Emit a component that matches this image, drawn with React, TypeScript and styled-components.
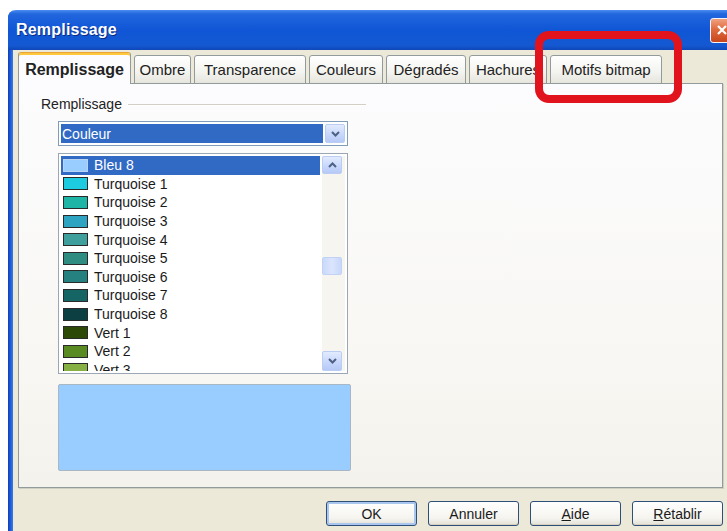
import styled, { createGlobalStyle } from 'styled-components'

const GlobalStyle = createGlobalStyle`
  html, body {
    margin: 0;
    padding: 0;
    background: #ffffff;
    overflow: hidden;
  }
  body {
    font-family: "Liberation Sans", Arial, sans-serif;
    color: #1a1a1a;
  }
`

const Page = styled.div`
  position: relative;
  width: 727px;
  height: 531px;
  padding: 10px 0 0 8px;
  box-sizing: border-box;
`

const Window = styled.div`
  width: 725px;
  height: 521px;
  display: flex;
  flex-direction: column;
  border-top-left-radius: 8px;
  overflow: hidden;
  background: linear-gradient(90deg, #0c3fb5 0%, #1d5bd8 50%, #3a7be6 100%);
  background-size: 5px 100%;
  background-repeat: repeat-y;
`

const TitleBar = styled.div`
  height: 40px;
  flex-shrink: 0;
  display: flex;
  align-items: center;
  justify-content: space-between;
  padding: 0 0 0 8px;
  background: linear-gradient(180deg, #4a8cf0 0%, #2266de 10%, #0f56d6 50%, #1459d2 88%, #0f47b8 100%);
`

const Title = styled.span`
  font-size: 16px;
  font-weight: bold;
  color: #ffffff;
  text-shadow: 1px 1px 0 #0a2a80;
  letter-spacing: 0.2px;
`

const CloseButton = styled.div`
  width: 22px;
  height: 23px;
  margin-right: -1px;
  display: flex;
  align-items: center;
  justify-content: center;
  border: 1px solid #f4f4f4;
  border-radius: 3px;
  background: linear-gradient(180deg, #f0a080 0%, #e06a3e 45%, #c8461e 100%);
`

const Body = styled.div`
  flex: 1;
  margin-left: 5px;
  margin-right: 5px;
  padding: 2px 5px 0 5px;
  background: #ece9d8;
  display: flex;
  flex-direction: column;
`

const TabStrip = styled.div`
  display: flex;
  align-items: flex-end;
  gap: 3px;
  height: 32px;
`

const Tab = styled.div<{ $w: number; $active?: boolean }>`
  position: relative;
  z-index: ${p => (p.$active ? 2 : 0)};
  width: ${p => p.$w}px;
  height: ${p => (p.$active ? 32 : 29)}px;
  box-sizing: border-box;
  display: flex;
  align-items: center;
  justify-content: center;
  padding-top: ${p => (p.$active ? 2 : 0)}px;
  font-size: ${p => (p.$active ? 16 : 15)}px;
  font-weight: ${p => (p.$active ? 'bold' : 'normal')};
  color: #222;
  white-space: nowrap;
  border: 1px solid #919b9c;
  border-bottom: ${p => (p.$active ? 'none' : '1px solid #919b9c')};
  border-radius: 3px 3px 0 0;
  background: ${p => (p.$active ? '#fcfcfe' : 'linear-gradient(180deg, #ffffff 0%, #f3f3ef 60%, #e6e5dd 100%)')};
  box-shadow: ${p => (p.$active ? 'inset 0 2px 0 #ffc83c' : 'none')};
  ${p => (p.$active ? 'border-top-color: #e8a23a;' : '')}
`

const Panel = styled.div`
  position: relative;
  z-index: 1;
  margin-top: -1px;
  height: 405px;
  box-sizing: border-box;
  border: 1px solid #919b9c;
  background: linear-gradient(180deg, #fcfcfe 0%, #f8f7f3 70%, #f3f2ec 100%);
  box-shadow: 1px 1px 0 #d0cfc4;
  padding: 11px 0 0 22px;
`

const GroupHeader = styled.div`
  display: flex;
  align-items: center;
  gap: 6px;
  width: 325px;
  height: 18px;
  font-size: 14px;
  color: #222;
`

const GroupLine = styled.div`
  flex: 1;
  height: 1px;
  background: #d2d0c4;
  box-shadow: 0 1px 0 #ffffff;
`

const Fields = styled.div`
  margin-left: 17px;
  display: flex;
  flex-direction: column;
  width: 293px;
`

const Dropdown = styled.div`
  margin-top: 8px;
  width: 290px;
  height: 25px;
  box-sizing: border-box;
  display: flex;
  padding: 2px;
  gap: 2px;
  border: 1px solid #7f9db9;
  background: #ffffff;
`

const DropdownValue = styled.div`
  flex: 1;
  display: flex;
  align-items: center;
  padding-left: 1px;
  font-size: 14px;
  color: #ffffff;
  background: #316ac5;
`

const ArrowButton = styled.div<{ $h?: number }>`
  width: 20px;
  height: ${p => (p.$h ? `${p.$h}px` : 'auto')};
  box-sizing: border-box;
  display: flex;
  align-items: center;
  justify-content: center;
  border: 1px solid #b9cdf5;
  border-radius: 2px;
  background: linear-gradient(180deg, #e2ebfe 0%, #c6d6fb 60%, #b6c9f6 100%);
`

const ListBox = styled.div`
  margin-top: 7px;
  width: 290px;
  height: 221px;
  box-sizing: border-box;
  display: flex;
  padding: 2px;
  border: 1px solid #9ba7b4;
  background: #ffffff;
`

const Rows = styled.div`
  flex: 1;
  overflow: hidden;
  display: flex;
  flex-direction: column;
`

const Row = styled.div<{ $selected?: boolean }>`
  height: 18.6px;
  flex-shrink: 0;
  display: flex;
  align-items: center;
  gap: 6px;
  padding-left: 2px;
  font-size: 14px;
  color: ${p => (p.$selected ? '#ffffff' : '#1a1a1a')};
  background: ${p => (p.$selected ? '#316ac5' : 'transparent')};
`

const Swatch = styled.div<{ $color: string; $selected?: boolean }>`
  width: 25px;
  height: 13px;
  box-sizing: border-box;
  border: 1px solid ${p => (p.$selected ? '#b8d4f4' : '#2a2a2a')};
  background: ${p => p.$color};
`

const ScrollBar = styled.div`
  width: 23px;
  margin-left: 2px;
  display: flex;
  flex-direction: column;
  background: #f6f5f0;
`

const ScrollTrack = styled.div`
  flex: 1;
  display: flex;
  flex-direction: column;
`

const Thumb = styled.div`
  width: 20px;
  height: 18px;
  box-sizing: border-box;
  border: 1px solid #c2d2f6;
  border-radius: 2px;
  background: linear-gradient(90deg, #cad9fb 0%, #dbe5fd 50%, #c8d7fa 100%);
`

const Preview = styled.div<{ $color: string }>`
  margin-top: 10px;
  width: 293px;
  height: 87px;
  box-sizing: border-box;
  border: 1px solid #a9b6c4;
  border-radius: 2px;
  background: ${p => p.$color};
`

const ButtonRow = styled.div`
  display: flex;
  justify-content: flex-end;
  gap: 11px;
  margin-top: 13px;
`

const Button = styled.div<{ $default?: boolean }>`
  width: 91px;
  height: 25px;
  box-sizing: border-box;
  display: flex;
  align-items: center;
  justify-content: center;
  font-size: 14px;
  color: #1a1a1a;
  border: 1px solid #2d4f78;
  border-radius: 3px;
  background: linear-gradient(180deg, #ffffff 0%, #f5f4ef 70%, #e3e1d6 100%);
  box-shadow: ${p => (p.$default ? 'inset 0 0 0 2px #a9c6ef' : 'inset 0 -1px 0 #d6d0c0')};
`

/* red highlight frame drawn over the tab strip */
const Marker = styled.div`
  position: absolute;
  z-index: 5;
  left: 535px;
  top: 31px;
  width: 147px;
  height: 72px;
  box-sizing: border-box;
  border: 8px solid #e1131c;
  border-radius: 14px;
  pointer-events: none;
`

const Chevron = ({ up }: { up?: boolean }) => (
  <svg width="9" height="6" viewBox="0 0 9 6">
    <path
      d={up ? 'M1 5 L4.5 1.5 L8 5' : 'M1 1 L4.5 4.5 L8 1'}
      fill="none"
      stroke="#4d6185"
      strokeWidth="2"
    />
  </svg>
)

const tabs = [
  { label: 'Remplissage', w: 113, active: true },
  { label: 'Ombre', w: 57 },
  { label: 'Transparence', w: 112 },
  { label: 'Couleurs', w: 74 },
  { label: 'Dégradés', w: 80 },
  { label: 'Hachures', w: 78 },
  { label: 'Motifs bitmap', w: 112 },
]

const colors = [
  { name: 'Bleu 8', color: '#99ccff' },
  { name: 'Turquoise 1', color: '#1ccbe0' },
  { name: 'Turquoise 2', color: '#1eb4a6' },
  { name: 'Turquoise 3', color: '#2fa3c2' },
  { name: 'Turquoise 4', color: '#3f9f9d' },
  { name: 'Turquoise 5', color: '#2e8d80' },
  { name: 'Turquoise 6', color: '#24817f' },
  { name: 'Turquoise 7', color: '#166565' },
  { name: 'Turquoise 8', color: '#0b3f42' },
  { name: 'Vert 1', color: '#2c4a05' },
  { name: 'Vert 2', color: '#5a8a22' },
  { name: 'Vert 3', color: '#86b044' },
]

const selected = 0
const thumbOffset = 83

const App = () => {
  return (
    <Page>
      <GlobalStyle />
      <Window>
        <TitleBar>
          <Title>Remplissage</Title>
          <CloseButton>
            <svg width="12" height="12" viewBox="0 0 12 12">
              <path d="M2 2 L10 10 M10 2 L2 10" stroke="#ffffff" strokeWidth="2.2" />
            </svg>
          </CloseButton>
        </TitleBar>
        <Body>
          <TabStrip>
            {tabs.map(t => (
              <Tab key={t.label} $w={t.w} $active={t.active}>
                {t.label}
              </Tab>
            ))}
          </TabStrip>
          <Panel>
            <GroupHeader>
              <span>Remplissage</span>
              <GroupLine />
            </GroupHeader>
            <Fields>
              <Dropdown>
                <DropdownValue>Couleur</DropdownValue>
                <ArrowButton>
                  <Chevron />
                </ArrowButton>
              </Dropdown>
              <ListBox>
                <Rows>
                  {colors.map((c, i) => (
                    <Row key={c.name} $selected={i === selected}>
                      <Swatch $color={c.color} $selected={i === selected} />
                      <span>{c.name}</span>
                    </Row>
                  ))}
                </Rows>
                <ScrollBar>
                  <ArrowButton $h={18}>
                    <Chevron up />
                  </ArrowButton>
                  <ScrollTrack>
                    <Thumb style={{ marginTop: thumbOffset }} />
                  </ScrollTrack>
                  <ArrowButton $h={20}>
                    <Chevron />
                  </ArrowButton>
                </ScrollBar>
              </ListBox>
              <Preview $color={colors[selected].color} />
            </Fields>
          </Panel>
          <ButtonRow>
            <Button $default>OK</Button>
            <Button>Annuler</Button>
            <Button>
              <u>A</u>ide
            </Button>
            <Button>
              <u>R</u>établir
            </Button>
          </ButtonRow>
        </Body>
      </Window>
      <Marker />
    </Page>
  )
}

export default App
